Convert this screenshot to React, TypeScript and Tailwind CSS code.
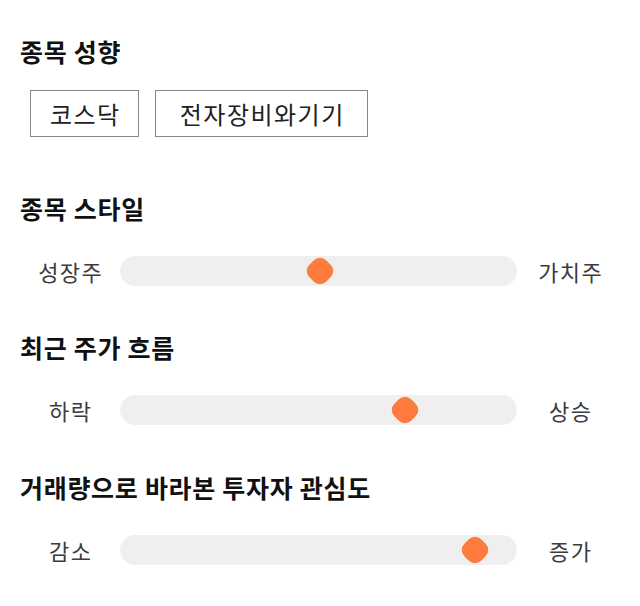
import React from "react";

const font = { fontFamily: '"Noto Sans CJK KR", "Noto Sans", sans-serif' };

function Heading({ children, className = "" }: { children: React.ReactNode; className?: string }) {
  return (
    <h2 className={`text-[25px] leading-[32px] font-bold tracking-[0.7px] text-[#111] pl-[20px] ${className}`}>{children}</h2>
  );
}

function Slider({ left, right, pos, className = "" }: { left: string; right: string; pos: number; className?: string }) {
  return (
    <div className={`grid grid-cols-[100px_397px_106px] items-center pl-[20px] ${className}`}>
      <div className="text-center text-[22px] leading-[30px] tracking-[1.5px] pl-[1.5px] text-[#3c3c3c]">{left}</div>
      <div className="relative h-[30px] rounded-full bg-[#efefef]">
        <div
          className="absolute top-1/2 w-[24px] h-[24px] rounded-[9px] bg-[#ff7a3d] rotate-45"
          style={{ left: pos - 12, marginTop: -12 }}
        />
      </div>
      <div className="text-center text-[22px] leading-[30px] tracking-[1.5px] pl-[1.5px] text-[#3c3c3c]">{right}</div>
    </div>
  );
}

export default function App() {
  return (
    <div className="w-[640px] h-[606px] bg-white pt-[35px]" style={font}>
      <Heading>종목 성향</Heading>
      <div className="flex gap-[16px] pl-[30px] mt-[23px]">
        <div className="h-[47px] w-[109px] border border-[#888] flex items-center justify-center pl-[1.5px] text-[24px] tracking-[1.5px] text-[#222]">
          코스닥
        </div>
        <div className="h-[47px] w-[213px] border border-[#888] flex items-center justify-center pl-[1.5px] text-[24px] tracking-[1.5px] text-[#222]">
          전자장비와기기
        </div>
      </div>
      <Heading className="mt-[55px]">종목 스타일</Heading>
      <Slider className="mt-[32px]" left="성장주" right="가치주" pos={200} />
      <Heading className="mt-[45px]">최근 주가 흐름</Heading>
      <Slider className="mt-[32px]" left="하락" right="상승" pos={285} />
      <Heading className="mt-[46px]">거래량으로 바라본 투자자 관심도</Heading>
      <Slider className="mt-[32px]" left="감소" right="증가" pos={355} />
    </div>
  );
}
